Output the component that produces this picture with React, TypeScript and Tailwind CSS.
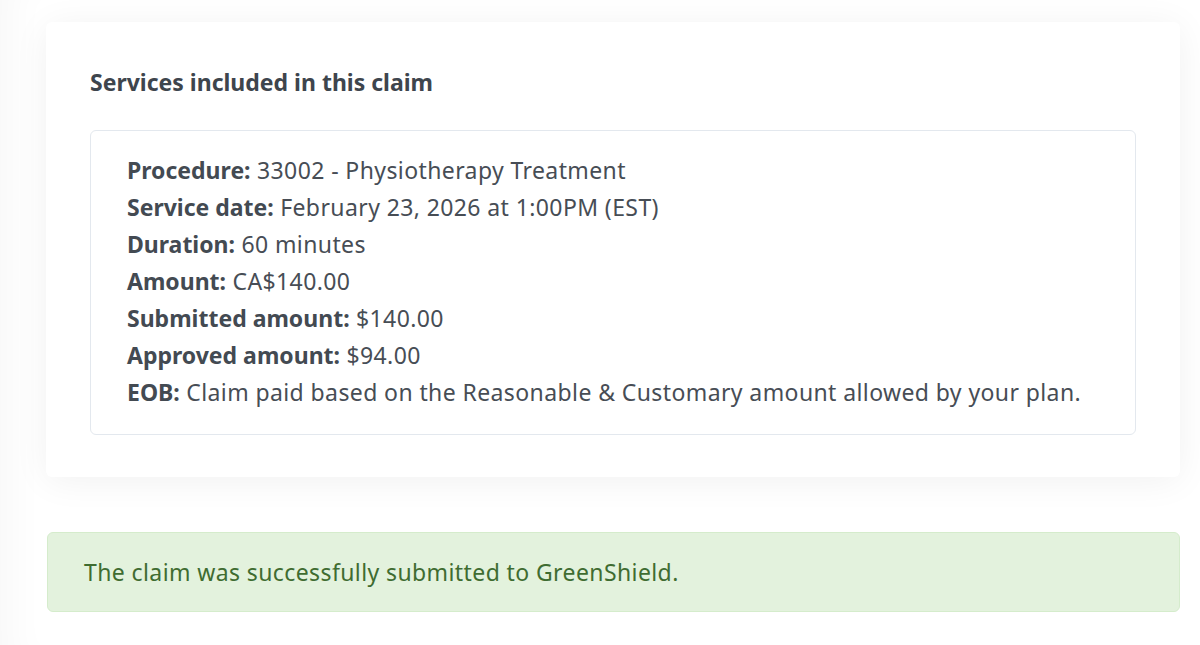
const lines: [string, string][] = [
  ['Procedure:', '33002 - Physiotherapy Treatment'],
  ['Service date:', 'February 23, 2026 at 1:00PM (EST)'],
  ['Duration:', '60 minutes'],
  ['Amount:', 'CA$140.00'],
  ['Submitted amount:', '$140.00'],
  ['Approved amount:', '$94.00'],
  ['EOB:', 'Claim paid based on the Reasonable & Customary amount allowed by your plan.'],
]

export default function App() {
  return (
    <div className="min-h-[645px] bg-white font-['Noto_Sans','Open_Sans',sans-serif] text-[#474d55]">
      <div className="flex flex-col pt-[22px] pl-[46px] pr-[20px] pb-[34px] shadow-[inset_40px_0_40px_-30px_rgba(0,0,0,0.035)]">
        <div className="rounded-md bg-white px-[44px] pt-[45px] pb-[42px] shadow-[0_4px_36px_rgba(0,0,0,0.06)]">
          <h2 className="text-[23px] font-bold leading-[30px] text-[#3e454d]">Services included in this claim</h2>
          <div className="mt-[33px] rounded-md border border-[#e3e8ee] pl-[36px] pr-6 pt-[21px] pb-[23px]">
            {lines.map(([label, value]) => (
              <p key={label} className="text-[23px] leading-[37px] tracking-[0.4px]">
                <span className="font-bold text-[#434a52] tracking-normal">{label}</span> {value}
              </p>
            ))}
          </div>
        </div>
        <div className="mt-[55px] ml-px flex h-[80px] items-center rounded-md border border-[#d5eccc] bg-[#e3f2dd] pl-[36px] text-[23px] tracking-[0.4px] text-[#3f6c31]">
          The claim was successfully submitted to GreenShield.
        </div>
      </div>
    </div>
  )
}
